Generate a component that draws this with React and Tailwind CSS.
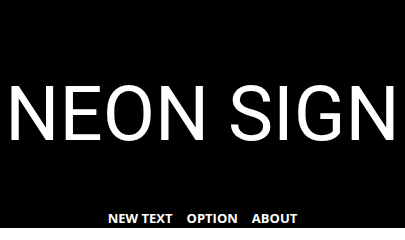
export default function App() {
  return (
    <div className="w-[405px] h-[228px] bg-black flex flex-col items-center overflow-hidden">
      <div className="h-[200px] flex items-center justify-center pt-[29px]">
        <h1 className="text-white text-[76px] leading-none font-normal whitespace-nowrap font-['Roboto',sans-serif]">NEON SIGN</h1>
      </div>
      <nav className="flex gap-[14px] text-white text-[13px] font-bold mt-[9px] font-['Open_Sans',sans-serif]">
        <span>NEW TEXT</span>
        <span>OPTION</span>
        <span>ABOUT</span>
      </nav>
    </div>
  );
}
